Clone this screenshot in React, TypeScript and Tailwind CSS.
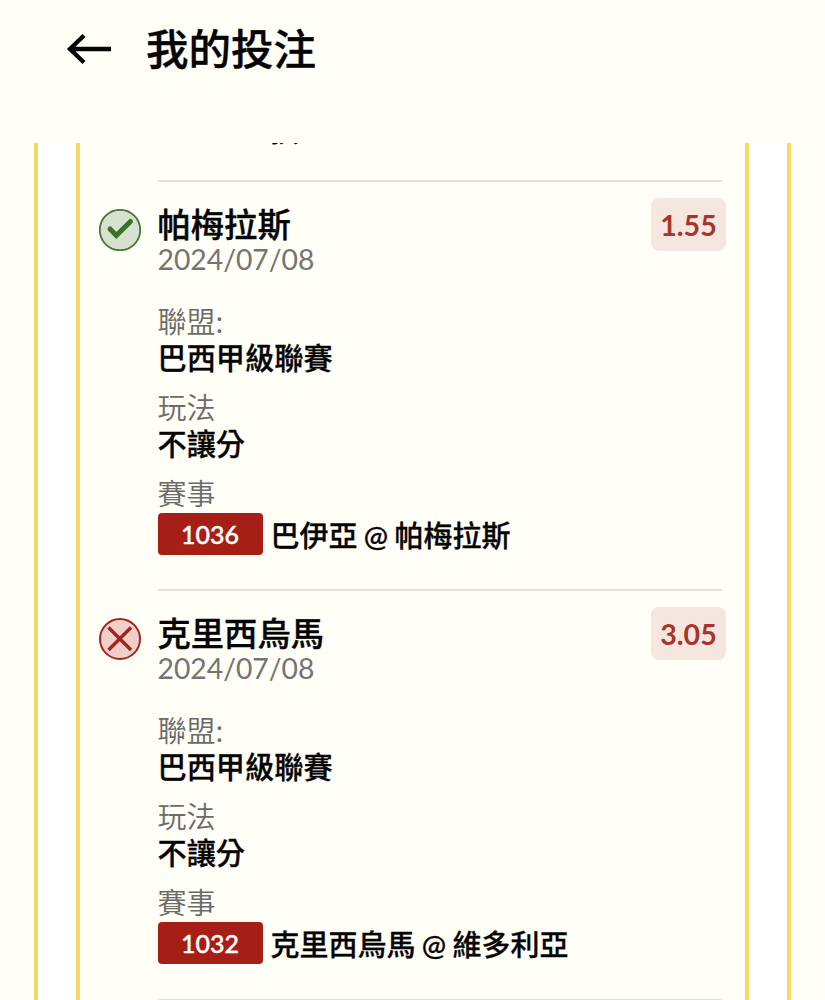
const bets = [
  {
    team: "帕梅拉斯",
    date: "2024/07/08",
    odds: "1.55",
    league: "巴西甲級聯賽",
    play: "不讓分",
    code: "1036",
    match: "巴伊亞 @ 帕梅拉斯",
    won: true,
  },
  {
    team: "克里西烏馬",
    date: "2024/07/08",
    odds: "3.05",
    league: "巴西甲級聯賽",
    play: "不讓分",
    code: "1032",
    match: "克里西烏馬 @ 維多利亞",
    won: false,
  },
];

function BackArrow() {
  return (
    <svg width="46" height="32" viewBox="0 0 46 32" fill="none" stroke="#050505" strokeWidth="4.4">
      <path d="M18 2.5 4 16 18 29.5M4 16H45" />
    </svg>
  );
}

function StatusIcon({ won }: { won: boolean }) {
  if (won) {
    return (
      <svg width="42" height="42" viewBox="0 0 42 42" fill="none">
        <circle cx="21" cy="21" r="20.2" fill="#d8e0d0" stroke="#48763c" strokeWidth="1.8" />
        <path d="M11 20 17.3 26.5 31.5 12.5" stroke="#3a722a" strokeWidth="5" strokeLinecap="round" />
      </svg>
    );
  }
  return (
    <svg width="42" height="42" viewBox="0 0 42 42" fill="none">
      <circle cx="21" cy="21" r="20" fill="#f0cfcb" stroke="#a3241c" strokeWidth="2" />
      <path d="M9.5 9.5 32 32M32 9.5 9.5 32" stroke="#a3241c" strokeWidth="3.4" />
    </svg>
  );
}

function Label({ text }: { text: string }) {
  return (
    <p className="pb-[3px] font-['Noto_Sans_CJK_TC',sans-serif] font-[350] leading-[33px] text-[#6b6b68]">
      {text}
    </p>
  );
}

function Field({ label, value }: { label: string; value: string }) {
  return (
    <div className="mb-3.5">
      <Label text={label} />
      <p className="text-[29.2px] font-medium [-webkit-text-stroke:0.3px_#050505]">{value}</p>
    </div>
  );
}

function BetItem({ bet }: { bet: (typeof bets)[number] }) {
  return (
    <div className="flex h-[409.3px] shrink-0 pl-[18.5px] pr-[19px]">
      <div className="w-[59px] shrink-0 pt-[28.5px]">
        <StatusIcon won={bet.won} />
      </div>
      <div className="flex-1 text-[29px] leading-9">
        <div className="mr-1 h-0.5 bg-[#e3e3dd]" />
        <div className="flex items-start justify-between">
          <div className="pt-6">
            <h2 className="text-[33.3px] font-medium leading-9 [-webkit-text-stroke:0.4px_#050505]">{bet.team}</h2>
            <p className="-mt-px text-[28.3px] text-[#747471]">{bet.date}</p>
          </div>
          <span className="mt-4 flex h-[53px] w-[75px] items-center justify-center rounded-lg bg-[#f5e6e0] text-[28.6px] font-bold text-[#a8352b]">
            {bet.odds}
          </span>
        </div>
        <div className="mt-[27px]">
          <Field label="聯盟:" value={bet.league} />
          <Field label="玩法" value={bet.play} />
          <Label text="賽事" />
        </div>
        <div className="mt-px flex items-center">
          <span className="flex h-[42px] w-[105px] items-center justify-center rounded bg-[#a61f17] pb-px text-[25px] font-medium text-white [-webkit-text-stroke:0.4px_#fff]">
            {bet.code}
          </span>
          <span className="ml-2 whitespace-nowrap pt-[3px] font-medium [-webkit-text-stroke:0.3px_#050505] [word-spacing:-1px]">
            {bet.match}
          </span>
        </div>
      </div>
    </div>
  );
}

export default function App() {
  return (
    <div className="flex h-[1000px] w-[825px] flex-col overflow-hidden bg-[#fffff8] font-['Lato','Noto_Sans_CJK_TC',sans-serif] text-[#050505]">
      <header className="flex h-[143px] shrink-0 items-start pl-[66px] pt-[19px]">
        <div className="pt-3.5">
          <BackArrow />
        </div>
        <h1 className="ml-[34px] text-[42.5px] font-medium leading-[60px] [-webkit-text-stroke:0.4px_#050505]">我的投注</h1>
      </header>
      <main className="ml-[34px] flex w-[757px] flex-1 flex-col overflow-hidden border-x-4 border-[#f4da64] bg-white px-[38px]">
        <div className="flex flex-1 flex-col overflow-hidden border-x-4 border-[#f4da64] bg-[#fffff8]">
          {/* tail of the previous bet, scrolled under the header */}
          <div className="h-[37px] shrink-0 overflow-hidden pl-[190px]">
            <p className="-mt-[30px] text-[28.8px] font-medium leading-9">損</p>
          </div>
          {bets.map((bet) => (
            <BetItem key={bet.code} bet={bet} />
          ))}
          <div className="ml-[78px] mr-[23px] h-0.5 shrink-0 bg-[#e3e3dd]" />
        </div>
      </main>
    </div>
  );
}
